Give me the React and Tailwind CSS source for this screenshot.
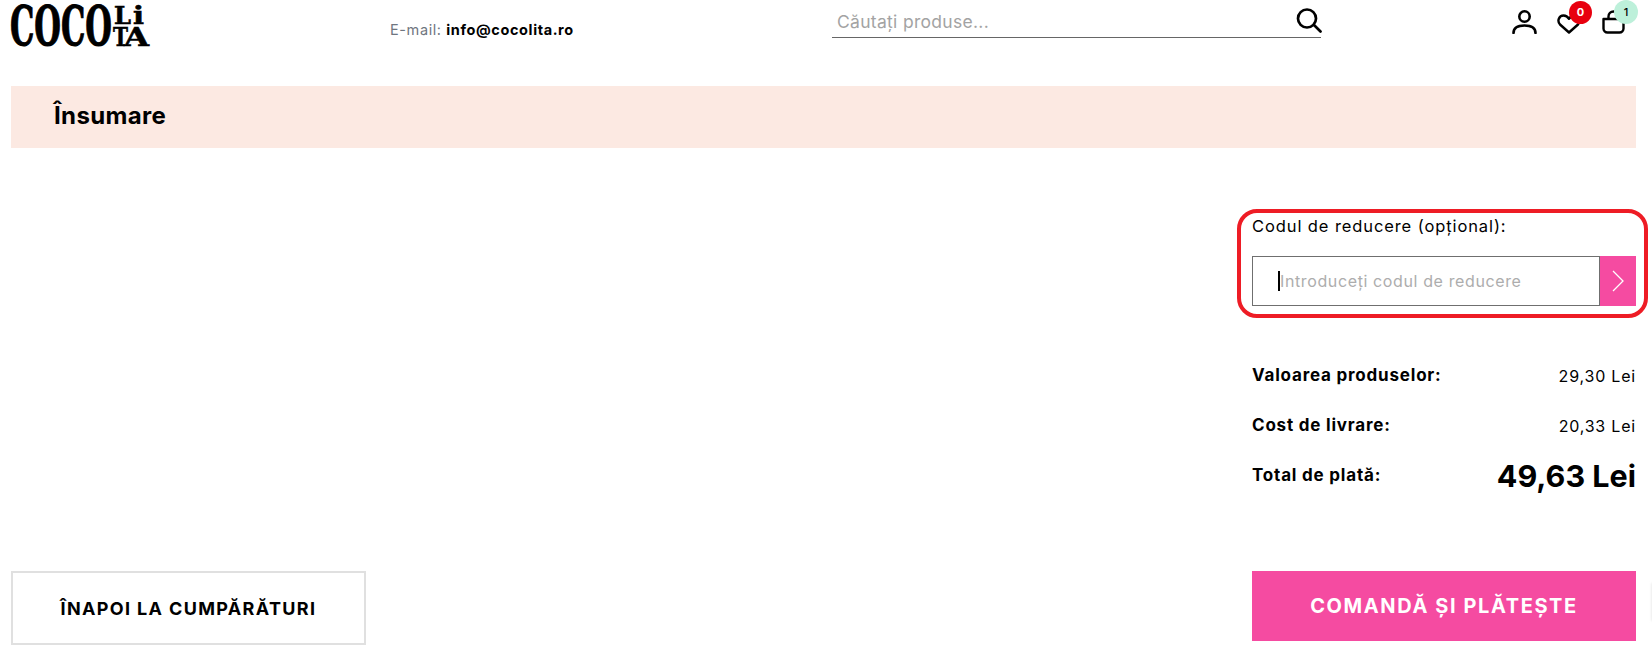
import React from "react";

const font = { fontFamily: "Inter" };

function Logo() {
  return (
    <svg width="142" height="44" viewBox="0 0 142 44" className="block overflow-visible">
      <g fill="#000" stroke="#000" fontFamily="'DejaVu Serif', serif" fontWeight="700">
        <text x="0" y="40" fontSize="54" textLength="102" lengthAdjust="spacingAndGlyphs" strokeWidth="1.1">COCO</text>
        <text x="104" y="19" fontSize="24" textLength="17" lengthAdjust="spacingAndGlyphs" strokeWidth="0.6">L</text>
        <text x="123" y="19" fontSize="24" textLength="11" lengthAdjust="spacingAndGlyphs" strokeWidth="0.6">i</text>
        <text x="103" y="41" fontSize="26" textLength="15" lengthAdjust="spacingAndGlyphs" strokeWidth="0.6">T</text>
        <text x="114" y="41" fontSize="26" textLength="25" lengthAdjust="spacingAndGlyphs" strokeWidth="0.6">A</text>
      </g>
    </svg>
  );
}

function Badge({ className, children }) {
  return (
    <span className={"absolute flex items-center justify-center rounded-full text-[11px] font-bold leading-none " + className}>
      {children}
    </span>
  );
}

export default function App() {
  return (
    <div className="relative h-[669px] w-[1652px] overflow-hidden bg-white px-[11px] text-black" style={font}>
      <header className="flex h-[86px]">
        <div className="ml-[-1px] mt-[5px] w-[380px] shrink-0">
          <Logo />
        </div>
        <div className="mt-[21px] w-[442px] shrink-0 whitespace-nowrap text-[14.5px] leading-[18px] tracking-[0.6px] text-[#6f7680]">
          E-mail: <span className="font-bold text-black">info@cocolita.ro</span>
        </div>
        <div className="mt-[9px] flex h-[29px] w-[489px] shrink-0 items-start justify-between border-b border-[#666] pl-[5px]">
          <span className="text-[17.5px] leading-[26px] tracking-[0.3px] text-[#a3a3a3]">Căutați produse...</span>
          <svg width="26" height="26" viewBox="0 0 26 26" fill="none" stroke="#000" strokeWidth="2.7" className="mr-[-1px] mt-[-2px]">
            <circle cx="11" cy="11.500" r="9" />
            <path d="M18 18l6.500 6.500" strokeLinecap="round" />
          </svg>
        </div>
        <div className="ml-[191px] mt-[10px] flex items-start">
          <svg width="25" height="24" viewBox="0 0 25 24" fill="none" stroke="#000" strokeWidth="2.600" strokeLinecap="round">
            <circle cx="12.500" cy="6.500" r="5.200" />
            <path d="M1.500 23c0-5 4-7.500 11-7.500s11 2.500 11 7.500" />
          </svg>
          <div className="relative ml-[20px] mt-[4px] h-[20px] w-[24px]">
            <svg width="24" height="20" viewBox="0 0 24 20" fill="none" stroke="#000" strokeWidth="2.400" strokeLinejoin="round">
              <path d="M12 18.500 3 10.500C-.2 7 2 1.500 6.500 1.500c2.500 0 4.300 1.300 5.500 3.300 1.200-2 3-3.300 5.500-3.300C22 1.500 24.200 7 21 10.500Z" />
            </svg>
            <Badge className="left-[12px] top-[-13px] h-[23px] w-[23px] bg-[#e8000f] text-white">0</Badge>
          </div>
          <div className="relative ml-[21px] h-[24px] w-[23px]">
            <svg width="23" height="24" viewBox="0 0 23 24" fill="none" stroke="#000" strokeWidth="2.400">
              <path d="M1.500 9h20v9.500a4 4 0 0 1-4 4h-12a4 4 0 0 1-4-4Z" strokeLinejoin="round" />
              <path d="M6.500 9V6.500a5 5 0 0 1 10 0V9" />
            </svg>
            <Badge className="left-[12px] top-[-10px] h-[24px] w-[24px] bg-[#bdf0da] font-medium text-black">1</Badge>
          </div>
        </div>
      </header>

      <div className="flex h-[62px] w-[1625px] items-center bg-[#fce9e2] pl-[43px]">
        <h1 className="mt-[-2px] text-[24px] font-bold leading-none tracking-[0.35px]">Însumare</h1>
      </div>

      <section className="ml-[1241px] mt-[68px] w-[384px]">
        <label className="block whitespace-nowrap text-[16.500px] leading-[20px] tracking-[0.9px]">Codul de reducere (opțional):</label>
        <div className="mt-[20px] flex h-[50px]">
          <div className="flex flex-1 items-center border border-[#6f6f6f] pl-[25px] text-[16px] tracking-[0.62px] text-[#adadad]">
            <span className="h-[20px] w-[2px] bg-black" />
            Introduceți codul de reducere
          </div>
          <button className="flex w-[36px] items-center justify-center bg-[#f54ba1]">
            <svg width="14" height="22" viewBox="0 0 14 22" fill="none" stroke="#fff" strokeWidth="1.300">
              <path d="M2 1l10 10L2 21" />
            </svg>
          </button>
        </div>

        <div className="mt-[60px] flex h-[20px] items-center justify-between text-[17px] tracking-[0.8px]">
          <span className="font-bold">Valoarea produselor:</span>
          <span className="text-[16px]">29,30 Lei</span>
        </div>
        <div className="mt-[30px] flex h-[20px] items-center justify-between text-[17px] tracking-[0.8px]">
          <span className="font-bold">Cost de livrare:</span>
          <span className="text-[16px]">20,33 Lei</span>
        </div>
        <div className="mt-[30px] flex h-[20px] items-center justify-between">
          <span className="text-[17px] font-bold tracking-[0.8px]">Total de plată:</span>
          <span className="text-[30.500px] font-bold">49,63 Lei</span>
        </div>
      </section>

      <div className="mt-[85px] flex w-[1625px] items-start justify-between">
        <button className="flex h-[74px] w-[355px] items-center justify-center border-2 border-[#e0e0e0] text-[18px] font-bold tracking-[1.35px]">
          ÎNAPOI LA CUMPĂRĂTURI
        </button>
        <button className="flex h-[70px] w-[384px] items-center justify-center bg-[#f54ba1] text-[20px] font-bold tracking-[1.6px] text-white">
          COMANDĂ ȘI PLĂTEȘTE
        </button>
      </div>

      <div className="pointer-events-none absolute left-[1237px] top-[209px] h-[109px] w-[411px] rounded-[20px] border-[4px] border-[#ee1c25]" />
      <div className="pointer-events-none absolute left-[1651px] top-[582px] h-[40px] w-[8px] rounded-full bg-[#ececec] blur-[1px]" />
    </div>
  );
}
